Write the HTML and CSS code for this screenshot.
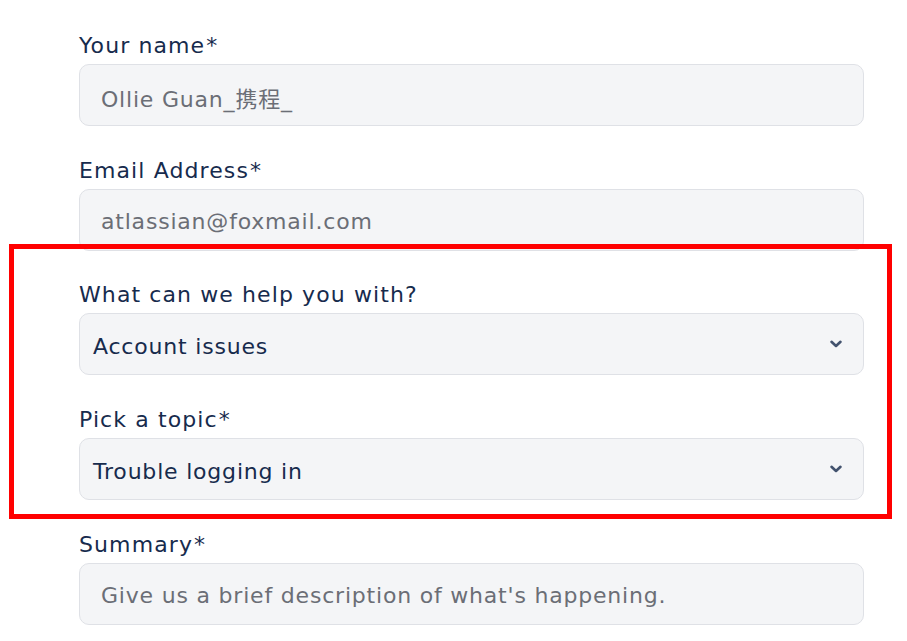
FILE: index.html
```html
<!DOCTYPE html>
<html>
<head>
<meta charset="utf-8">
<link rel="stylesheet" href="styles.css">
</head>
<body>
<form class="form">
  <div class="field">
    <label class="label">Your name<span class="req">*</span></label>
    <div class="input placeholder"><span class="txt">Ollie Guan_携程_</span></div>
  </div>
  <div class="field">
    <label class="label">Email Address<span class="req">*</span></label>
    <div class="input placeholder"><span class="txt">atlassian@foxmail.com</span></div>
  </div>
  <div class="field">
    <label class="label">What can we help you with?</label>
    <div class="input select"><span class="txt">Account issues</span>
      <svg class="chev" width="14" height="10" viewBox="0 0 14 10"><path d="M2.5 2.8 L7 7 L11.5 2.8" fill="none" stroke="#42526E" stroke-width="2.6" stroke-linecap="round" stroke-linejoin="round"/></svg>
    </div>
  </div>
  <div class="field">
    <label class="label">Pick a topic<span class="req">*</span></label>
    <div class="input select"><span class="txt">Trouble logging in</span>
      <svg class="chev" width="14" height="10" viewBox="0 0 14 10"><path d="M2.5 2.8 L7 7 L11.5 2.8" fill="none" stroke="#42526E" stroke-width="2.6" stroke-linecap="round" stroke-linejoin="round"/></svg>
    </div>
  </div>
  <div class="field">
    <label class="label">Summary<span class="req">*</span></label>
    <div class="input placeholder"><span class="txt">Give us a brief description of what's happening.</span></div>
  </div>
  <div class="highlight"></div>
</form>
</body>
</html>
```

FILE: styles.css
```css
html, body {
  margin: 0;
  padding: 0;
  background: #ffffff;
}
body {
  font-family: "DejaVu Sans", "Noto Sans CJK SC", sans-serif;
  color: #172B4D;
  overflow: hidden;
}
.form {
  position: relative;
  display: flex;
  flex-direction: column;
  gap: 28.7px;
  padding: 30px 0 0 79px;
  width: 785px;
}
.field {
  display: flex;
  flex-direction: column;
  gap: 2px;
}
.label {
  font-size: 22px;
  line-height: 32px;
  height: 32px;
  color: #172B4D;
  letter-spacing: 1.1px;
}
.req {
  margin-left: 1px;
}
.input {
  box-sizing: border-box;
  height: 62px;
  border: 1px solid #DFE1E6;
  border-radius: 10px;
  background: #F4F5F7;
  display: flex;
  align-items: center;
  font-size: 22px;
  letter-spacing: 0.8px;
}
.txt {
  padding-top: 4px;
}
.placeholder {
  padding-left: 21px;
  color: #6B6E76;
}
.select {
  padding: 0 20px 0 13px;
  justify-content: space-between;
  color: #172B4D;
}
.chev {
  display: block;
}
.highlight {
  position: absolute;
  left: 9px;
  top: 244px;
  width: 873px;
  height: 265px;
  border: 5px solid #FF0000;
  pointer-events: none;
}
```
